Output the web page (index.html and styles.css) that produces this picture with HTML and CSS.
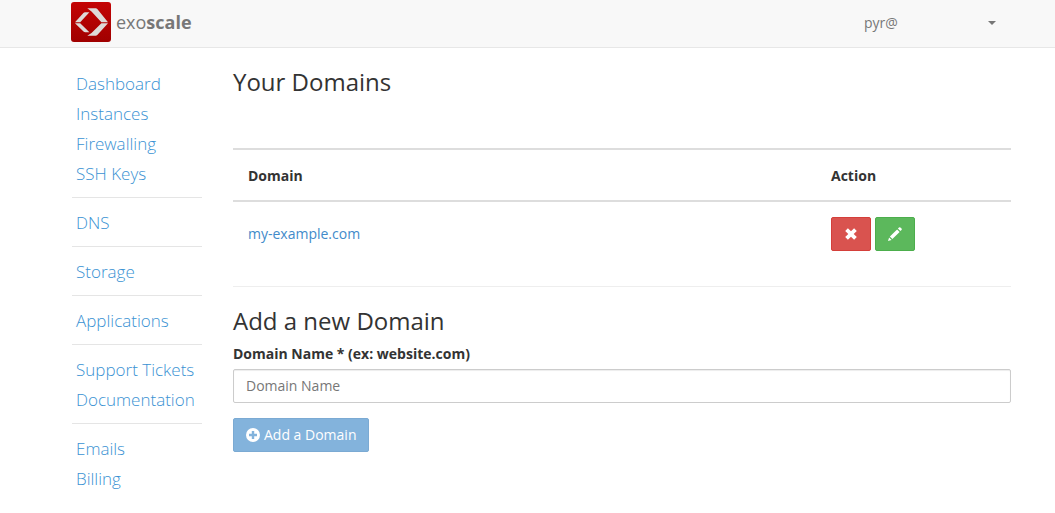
FILE: index.html
```html
<!DOCTYPE html>
<html lang="en">
<head>
<meta charset="utf-8">
<meta name="viewport" content="width=device-width, initial-scale=1">
<title>exoscale</title>
<link rel="stylesheet" href="styles.css">
</head>
<body>
<header class="navbar">
  <a class="brand" href="#">
    <svg class="brand-logo" viewBox="0 0 40 40" aria-hidden="true">
      <defs>
        <linearGradient id="logo-red" x1="0" y1="0" x2="0" y2="1">
          <stop offset="0" stop-color="#c40404"/>
          <stop offset="1" stop-color="#a00000"/>
        </linearGradient>
      </defs>
      <rect width="40" height="40" rx="3" fill="url(#logo-red)"/>
      <g fill="#dedad8">
        <path d="M16.3 6.3h8.4q1 0 1.6.8L37 20.2h-6.6L20.5 9.4z"/>
        <path d="M4 20.2 12.4 11q.7-.7 1.6-.7h4.4L9.2 20.2z"/>
        <path d="M4 21.3h5.2l9.2 9h-4.2q-1 0-1.7-.7z"/>
        <path d="M30.4 21.3H37L26.3 33q-.7.8-1.7.8h-8.3l4.2-2.9z"/>
      </g>
    </svg>
    <span>exo<b>scale</b></span>
  </a>
  <button class="account" type="button"><span>pyr@</span><span class="caret"></span></button>
</header>
<div class="page">
  <nav class="sidebar">
    <ul class="group">
      <li><a href="#">Dashboard</a></li>
      <li><a href="#">Instances</a></li>
      <li><a href="#">Firewalling</a></li>
      <li><a href="#">SSH Keys</a></li>
    </ul>
    <ul class="group"><li><a href="#">DNS</a></li></ul>
    <ul class="group"><li><a href="#">Storage</a></li></ul>
    <ul class="group"><li><a href="#">Applications</a></li></ul>
    <ul class="group">
      <li><a href="#">Support Tickets</a></li>
      <li><a href="#">Documentation</a></li>
    </ul>
    <ul class="group">
      <li><a href="#">Emails</a></li>
      <li><a href="#">Billing</a></li>
    </ul>
  </nav>
  <main class="content">
    <h1 class="title">Your Domains</h1>
    <table class="domains">
      <thead><tr><th scope="col">Domain</th><th scope="col" class="action">Action</th></tr></thead>
      <tbody><tr>
        <td><a href="#">my-example.com</a></td>
        <td><div class="actions">
          <button class="btn danger" type="button" aria-label="Delete">
            <svg class="icon" viewBox="0 0 14 14" aria-hidden="true"><path d="M3.9 1.2 7 4.3l3.1-3.1 2.7 2.7L9.7 7l3.1 3.1-2.7 2.7L7 9.7l-3.1 3.1-2.7-2.7L4.3 7 1.2 3.9z" fill="#fff"/></svg>
          </button>
          <button class="btn success" type="button" aria-label="Edit">
            <svg class="icon" viewBox="0 0 14 14" aria-hidden="true"><path d="M0 14 1.1 10.4l2.5 2.5zM1.9 9.6l7.2-7.2 2.5 2.5-7.2 7.2zM9.9 1.6l1.1-1.1q.7-.7 1.4 0l1.1 1.1q.7.7 0 1.4l-1.1 1.1z" fill="#fff"/></svg>
          </button>
        </div></td>
      </tr></tbody>
    </table>
    <form class="add-form">
      <h2 class="title">Add a new Domain</h2>
      <label for="domain-name">Domain Name * (ex: website.com)</label>
      <input class="field" id="domain-name" type="text" placeholder="Domain Name">
      <button class="btn primary" type="submit" disabled>
        <svg class="icon" viewBox="0 0 14 14" aria-hidden="true"><path fill-rule="evenodd" d="M7 0a7 7 0 1 1 0 14A7 7 0 0 1 7 0zM5.8 3v2.8H3v2.4h2.8V11h2.4V8.2H11V5.8H8.2V3z" fill="#fff"/></svg>
        Add a Domain
      </button>
    </form>
  </main>
</div>
</body>
</html>
```
FILE: styles.css
```css
* { box-sizing: border-box; }

body {
  margin: 0;
  background: #fff;
  color: #333;
  font: 14px/20px "Open Sans", sans-serif;
}

a { color: #428bca; text-decoration: none; }

.navbar {
  display: flex;
  justify-content: space-between;
  height: 48px;
  padding: 2px 59px 0 71px;
  background: #f8f8f8;
  border-bottom: 1px solid #e7e7e7;
}

.brand {
  display: flex;
  gap: 5px;
  height: 40px;
  line-height: 40px;
  font-size: 18px;
  color: #777;
}

.brand-logo { width: 40px; height: 40px; }

.account {
  display: flex;
  align-items: center;
  justify-content: space-between;
  width: 132px;
  height: 42px;
  padding: 0;
  border: 0;
  background: none;
  font: inherit;
  color: #777;
}

.caret {
  border: 4px solid transparent;
  border-top-color: #777;
  border-bottom: 0;
}

.page {
  display: grid;
  grid-template-columns: 130px 1fr;
  gap: 31px;
  padding: 21px 44px 19px 72px;
}

.group {
  margin: 0;
  padding: 0 4px;
  list-style: none;
  font-size: 17px;
  font-weight: 300;
  line-height: 30px;
  white-space: nowrap;
}

.group + .group {
  margin-top: 8px;
  padding-top: 10px;
  border-top: 1px solid #e5e5e5;
}

.group a { color: #3a92d3; }

.title {
  margin: 0;
  font-size: 24px;
  font-weight: 400;
  line-height: 26px;
}

.domains {
  width: 100%;
  margin-top: 53px;
  border-collapse: collapse;
  border-top: 2px solid #ddd;
}

.domains th, .domains td { padding: 15px; text-align: left; }
.domains th { padding: 16px 15px 14px; border-bottom: 2px solid #ddd; font-weight: 700; }
.domains .action { width: 195px; }

.actions { display: flex; gap: 4px; }

.btn {
  display: inline-flex;
  align-items: center;
  gap: 4px;
  height: 34px;
  padding: 0 12px;
  border: 1px solid;
  border-radius: 2px;
  font: inherit;
  color: #fff;
}

.icon { width: 14px; height: 14px; }
.danger { background: #d9534f; border-color: #d43f3a; }
.success { background: #5cb85c; border-color: #4cae4c; }
.primary { background: #428bca; border-color: #357ebd; opacity: 0.65; }

.add-form {
  display: flex;
  flex-direction: column;
  align-items: flex-start;
  margin-top: 20px;
  padding-top: 21px;
  border-top: 1px solid #eee;
}

.add-form label { margin: 10px 0 5px; font-weight: 700; }

.field {
  width: 100%;
  height: 34px;
  margin-bottom: 15px;
  padding: 5px 12px 7px;
  border: 1px solid #ccc;
  border-radius: 2px;
  box-shadow: inset 0 1px 1px rgba(0, 0, 0, 0.075);
  font: inherit;
  color: #555;
}

.field::placeholder { color: #777; }
```
